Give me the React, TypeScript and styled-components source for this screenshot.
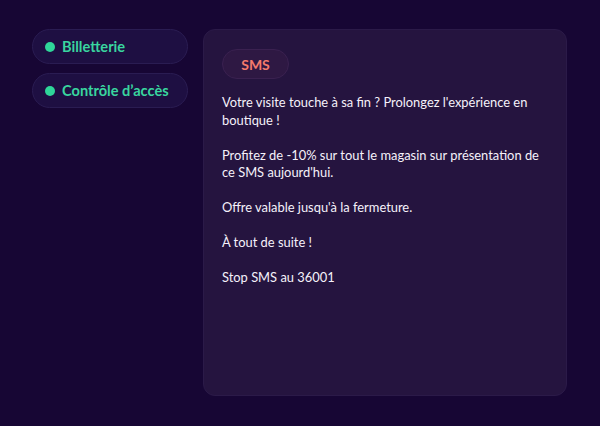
import React from "react";
import styled, { createGlobalStyle } from "styled-components";

const Global = createGlobalStyle`
  html, body { margin: 0; padding: 0; background: #170634; }
  body { font-family: "Lato", "Noto Sans", sans-serif; }
  * { box-sizing: border-box; }
`;

const Page = styled.div`
  width: 600px;
  height: 426px;
  background: #170634;
  display: flex;
  gap: 15px;
  padding: 29px 33px 30px 32px;
`;

const Nav = styled.nav`
  width: 156px;
  display: flex;
  flex-direction: column;
  gap: 9px;
`;

const NavItem = styled.div`
  height: 35px;
  border-radius: 18px;
  background: #1e0f42;
  border: 1px solid #2a1c52;
  display: flex;
  align-items: center;
  gap: 7px;
  padding-left: 12px;
  color: #39d59f;
  font-weight: 700;
  font-size: 14.6px;
`;

const Dot = styled.span`
  width: 10px;
  height: 10px;
  border-radius: 50%;
  background: #2fd699;
`;

const Panel = styled.section`
  flex: 1;
  background: #25143f;
  border-radius: 12px;
  border: 1px solid #2b1a48;
  padding: 19px 18px;
  color: #f5f1fa;
`;

const Badge = styled.div`
  display: inline-flex;
  align-items: center;
  justify-content: center;
  width: 67px;
  height: 30px;
  border-radius: 15px;
  background: #2e1843;
  border: 1px solid #3a2150;
  color: #f47a6c;
  font-weight: 700;
  font-size: 14px;
  margin-bottom: 15px;
`;

const Message = styled.p`
  margin: 0;
  white-space: pre-line;
  font-size: 12.9px;
  line-height: 17.5px;
`;

const text = `Votre visite touche à sa fin ? Prolongez l'expérience en boutique !

Profitez de -10% sur tout le magasin sur présentation de ce SMS aujourd'hui.

Offre valable jusqu'à la fermeture.

À tout de suite !

Stop SMS au 36001`;

export default function App() {
  return (
    <>
      <Global />
      <Page>
        <Nav>
          <NavItem><Dot />Billetterie</NavItem>
          <NavItem><Dot />Contrôle d’accès</NavItem>
        </Nav>
        <Panel>
          <Badge>SMS</Badge>
          <Message>{text}</Message>
        </Panel>
      </Page>
    </>
  );
}
